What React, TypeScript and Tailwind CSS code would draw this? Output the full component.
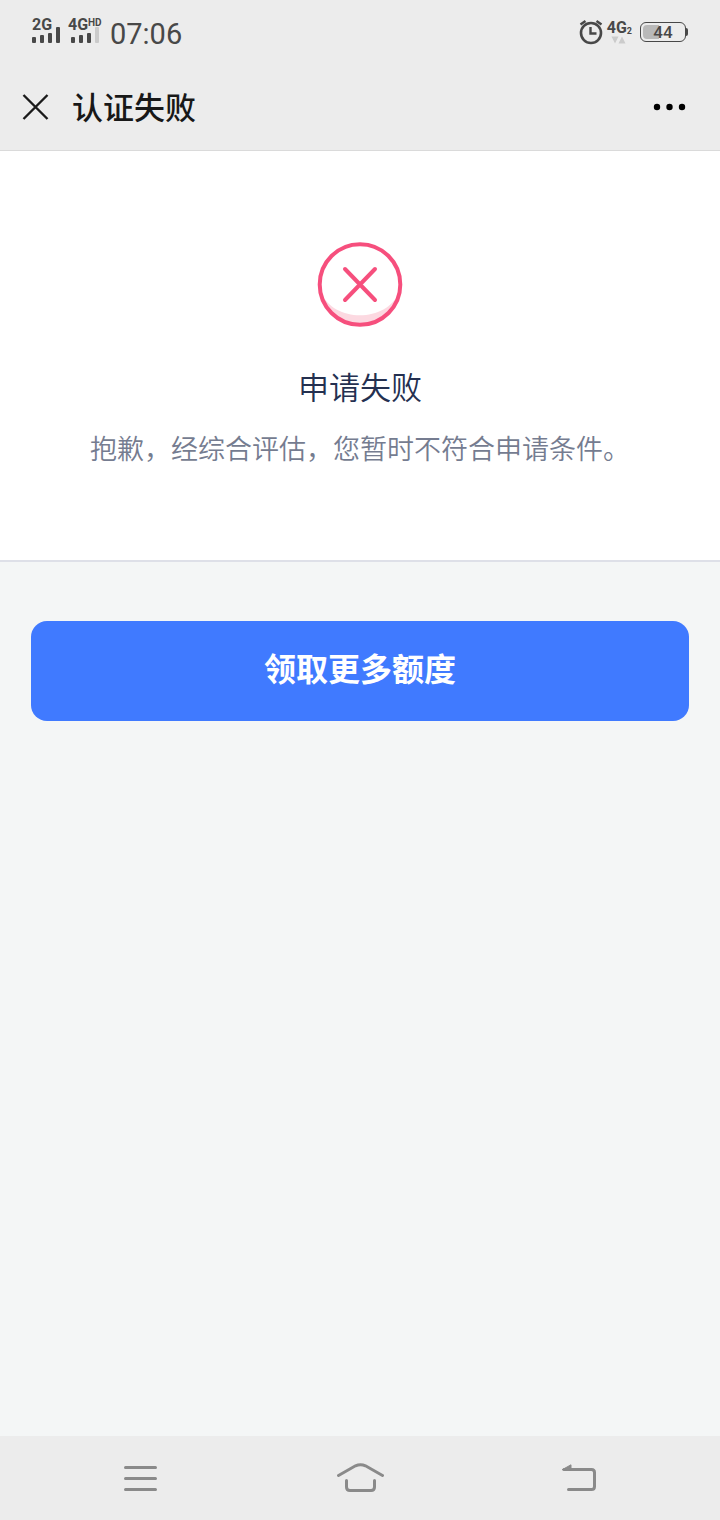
import { useState } from 'react';

function SignalBars({ weak = false }: { weak?: boolean }) {
  return (
    <svg viewBox="0 0 28 16" className="h-4 w-7" fill="#484848" aria-hidden="true">
      <rect x="0" y="10" width="4" height="6" rx="1" />
      <rect x="8" y="8" width="4" height="8" rx="1" />
      <rect x="16" y="6" width="4" height="10" rx="1" />
      <rect x="24" y="0" width="4" height="16" rx="1" fill={weak ? '#cbcbcb' : '#484848'} />
    </svg>
  );
}

function AlarmIcon() {
  return (
    <svg viewBox="0 0 24 26" className="h-[26px] w-6" fill="none" stroke="#484848" aria-hidden="true">
      <circle cx="12" cy="14" r="10" strokeWidth="2.6" />
      <path d="M11.500 8V14.500H17.500" strokeWidth="2.4" />
      <path d="M1.500 5.500L6.500 2M22.500 5.500L17.500 2" strokeWidth="2.4" />
    </svg>
  );
}

function FailIcon() {
  return (
    <svg viewBox="0 0 86 87" className="h-[87px] w-[86px]" fill="none" aria-hidden="true">
      <path d="M4 51C16 82 70 82 82 51A40 40 0 0 1 4 51Z" fill="#fcd9e1" />
      <circle cx="43" cy="43.5" r="40.3" stroke="#f64f7d" strokeWidth="4" />
      <path d="M28 28L58 59M58 28L28 59" stroke="#f64f7d" strokeWidth="4" strokeLinecap="round" />
    </svg>
  );
}

function StatusBar() {
  return (
    <div className="flex h-16 items-center justify-between px-8 font-[Roboto] text-[#484848]">
      <div className="flex items-center">
        <div className="relative flex h-7 w-7 items-end pb-[3px]">
          <span className="absolute -top-px left-0 text-base leading-4 font-bold">2G</span>
          <SignalBars />
        </div>
        <div className="relative ml-2 flex h-7 w-9 items-end pb-[3px] pl-[3px]">
          <span className="absolute -top-px left-0 text-base leading-4 font-bold">4G</span>
          <span className="absolute top-0 left-5 text-[10px] leading-[10px] font-bold">HD</span>
          <SignalBars weak />
        </div>
        <span className="ml-1.5 pt-1 text-[29px] leading-9">07:06</span>
      </div>
      <div className="flex items-center gap-1">
        <AlarmIcon />
        <div className="flex flex-col items-start">
          <span className="flex items-end text-base leading-4 font-bold">
            4G<span className="text-[9px] leading-[10px]">2</span>
          </span>
          <svg viewBox="0 0 16 8" className="ml-1 h-2 w-4" fill="#cbcbcb" aria-hidden="true">
            <path d="M0.500 0.500H7.500L4 7.500ZM7.500 7.500H14.500L11 0.500Z" />
          </svg>
        </div>
        <div className="ml-1 flex items-center">
          <div className="relative flex h-5 w-[46px] items-center justify-center rounded-md border border-[#484848]">
            <span className="absolute top-0.5 bottom-0.5 left-0.5 w-4 rounded-l bg-[#b9b9b9]" />
            <span className="relative text-[17px] leading-5 font-medium">44</span>
          </div>
          <span className="h-2 w-0.5 rounded-r bg-[#484848]" />
        </div>
      </div>
    </div>
  );
}

function TitleBar({ title }: { title: string }) {
  return (
    <header className="flex h-[87px] items-center justify-between border-b border-[#dadada] pr-8 pl-[22px]">
      <div className="flex items-center gap-[22px]">
        <button type="button" aria-label="关闭" className="cursor-pointer">
          <svg viewBox="0 0 28 28" className="h-7 w-7" stroke="#1a1a1a" strokeWidth="2.4" fill="none">
            <path d="M1.500 2L25.500 26M25.500 2L1.500 26" />
          </svg>
        </button>
        <h1 className="pb-0.5 text-[31px] leading-10 font-medium text-[#181818]">{title}</h1>
      </div>
      <button type="button" aria-label="更多" className="cursor-pointer">
        <svg viewBox="0 0 36 8" className="h-2 w-9" fill="#000">
          <circle cx="5" cy="4" r="3.2" />
          <circle cx="17.5" cy="4" r="3.2" />
          <circle cx="30" cy="4" r="3.2" />
        </svg>
      </button>
    </header>
  );
}

function NavBar() {
  return (
    <nav className="grid h-[84px] grid-cols-[1fr_160px_1fr] items-center bg-[#ececec]">
      <button type="button" aria-label="菜单" className="flex cursor-pointer justify-center">
        <svg viewBox="0 0 36 28" className="h-7 w-9" stroke="#8a8a8a" strokeWidth="3" strokeLinecap="round" fill="none">
          <path d="M3.500 3.500H33.500M3.500 14.500H33.500M3.500 25.500H33.500" />
        </svg>
      </button>
      <button type="button" aria-label="主页" className="flex cursor-pointer justify-center">
        <svg viewBox="0 0 48 30" className="h-[30px] w-12" stroke="#8a8a8a" strokeWidth="3" strokeLinecap="round" fill="none">
          <path d="M2.500 12.500L19.500 2.800Q24.500 0.500 29.500 2.800L46.500 12.500" />
          <path d="M10.500 17.500V24Q10.500 27.500 14 27.500H35Q38.500 27.500 38.500 24V17.500" />
        </svg>
      </button>
      <button type="button" aria-label="返回" className="flex cursor-pointer justify-center">
        <svg viewBox="0 0 36 28" className="h-7 w-9" stroke="#8a8a8a" strokeWidth="3" strokeLinecap="round" fill="none">
          <path d="M2 5.500H29.500Q32.500 5.500 32.500 8.500V22.500Q32.500 25.500 29.500 25.500H6.500" />
          <path d="M0.500 5.500L9 0.800V5.500Z" fill="#8a8a8a" strokeWidth="1" />
        </svg>
      </button>
    </nav>
  );
}

export default function App() {
  const [claimed, setClaimed] = useState(false);

  return (
    <div className="flex min-h-screen flex-col bg-[#f4f6f6] font-['Noto_Sans_CJK_SC',sans-serif]">
      <div className="bg-[#ececec]">
        <StatusBar />
        <TitleBar title="认证失败" />
      </div>

      <main className="flex-1">
        <section className="flex flex-col items-center border-b-2 border-[#dee0e8] bg-white px-4 py-[90px] text-center">
          <FailIcon />
          <h2 className="mt-9 text-[31px] leading-11 font-[350] text-[#243050]">申请失败</h2>
          <p className="mt-5 mb-0.5 text-[27px] leading-10 font-[350] text-[#757c90]">
            抱歉，经综合评估，您暂时不符合申请条件。
          </p>
        </section>

        <div className="px-[31px] pt-[59px]">
          <button
            type="button"
            onClick={() => setClaimed(true)}
            disabled={claimed}
            className="h-[100px] w-full cursor-pointer rounded-2xl bg-[#407aff] pb-2 text-[32px] font-bold text-white"
          >
            领取更多额度
          </button>
        </div>
      </main>

      <NavBar />
    </div>
  );
}
